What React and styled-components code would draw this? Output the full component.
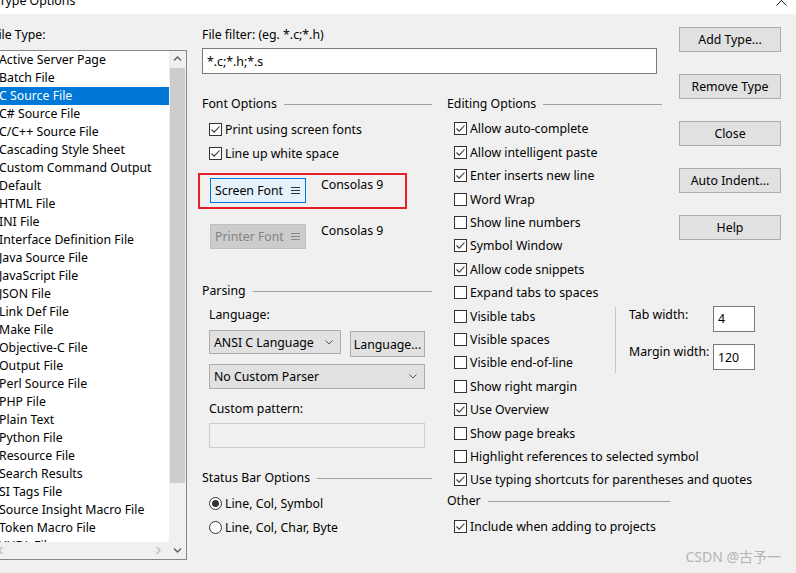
import React from "react";
import styled, { createGlobalStyle } from "styled-components";

const GlobalStyle = createGlobalStyle`
  html, body {
    margin: 0;
    padding: 0;
    background: #f0f0f0;
  }
  body {
    font-family: "Noto Sans", "Noto Sans CJK SC", sans-serif;
    font-size: 12.3px;
    color: #000;
    overflow: hidden;
  }
`;

const Window = styled.div`
  position: relative;
  width: 796px;
  height: 573px;
  overflow: hidden;
  background: #f0f0f0;
`;

const TitleBar = styled.div`
  height: 14px;
  background: #fff;
  display: flex;
  justify-content: space-between;
  align-items: flex-start;
  overflow: hidden;
`;

const TitleText = styled.div`
  margin: -7px 0 0 -1px;
  line-height: 16px;
`;

const CloseIcon = styled.svg`
  margin: -5px 9px 0 0;
`;

const Body = styled.div`
  display: flex;
  align-items: flex-start;
`;

const LeftCol = styled.div`
  margin-left: -8px;
  width: 195px;
  padding-top: 13px;
  display: flex;
  flex-direction: column;
`;

const Label = styled.div`
  line-height: 16px;
  padding-left: ${(p) => p.indent || 0}px;
  margin-top: ${(p) => p.top || 0}px;
  white-space: nowrap;
`;

const ListBox = styled.div`
  margin-top: 7px;
  height: 510px;
  box-sizing: border-box;
  border: 1px solid #828790;
  background: #fff;
  display: flex;
`;

const ListMain = styled.div`
  width: 176px;
  display: flex;
  flex-direction: column;
`;

const Items = styled.div`
  height: 491px;
  overflow: hidden;
`;

const Item = styled.div`
  height: 18px;
  line-height: 18px;
  padding-left: 6px;
  white-space: nowrap;
  background: ${(p) => (p.selected ? "#0078d7" : "transparent")};
  color: ${(p) => (p.selected ? "#fff" : "#000")};
`;

const HScroll = styled.div`
  height: 17px;
  background: #f0f0f0;
  display: flex;
  align-items: center;
  justify-content: space-between;
  padding: 0 6px 0 4px;
`;

const VScroll = styled.div`
  width: 17px;
  background: #f0f0f0;
  display: flex;
  flex-direction: column;
`;

const Arrow = styled.div`
  height: 17px;
  display: flex;
  align-items: center;
  justify-content: center;
`;

const Thumb = styled.div`
  height: 415px;
  margin: 0 1px;
  background: #cdcdcd;
`;

const Track = styled.div`
  flex: 1;
`;

const MiddleCol = styled.div`
  margin-left: 15px;
  width: 468px;
  padding-top: 13px;
  display: flex;
  flex-direction: column;
`;

const TextInput = styled.div`
  box-sizing: border-box;
  width: ${(p) => p.w}px;
  height: ${(p) => p.h || 26}px;
  margin-top: ${(p) => p.top || 0}px;
  border: 1px solid ${(p) => (p.disabled ? "#cccccc" : "#7a7a7a")};
  background: ${(p) => (p.disabled ? "#f0f0f0" : "#fff")};
  padding-left: 4px;
  display: flex;
  align-items: center;
`;

const Columns = styled.div`
  margin-top: 22px;
  display: flex;
  gap: 15px;
`;

const SubCol = styled.div`
  width: ${(p) => p.w}px;
  flex: none;
  display: flex;
  flex-direction: column;
`;

const Heading = styled.div`
  width: ${(p) => p.w}px;
  height: 16px;
  line-height: 16px;
  margin-top: ${(p) => p.top || 0}px;
  display: flex;
  align-items: center;
  white-space: nowrap;

  &::after {
    content: "";
    flex: 1;
    height: 1px;
    margin: 1px 0 0 7px;
    background: #a0a0a0;
  }
`;

const OptionList = styled.div`
  margin-top: ${(p) => p.top || 0}px;
  padding-left: 7px;
  display: flex;
  flex-direction: column;
`;

const OptionRow = styled.div`
  height: ${(p) => p.h}px;
  display: flex;
  align-items: center;
  gap: 3px;
  white-space: nowrap;
`;

const Box = styled.div`
  box-sizing: border-box;
  flex: none;
  width: 13px;
  height: 13px;
  border: 1px solid #333;
  background: #fff;
  display: flex;
  align-items: center;
  justify-content: center;
  border-radius: ${(p) => (p.round ? "50%" : "0")};
`;

const Dot = styled.div`
  width: 7px;
  height: 7px;
  border-radius: 50%;
  background: #333;
`;

const FontRow = styled.div`
  box-sizing: border-box;
  width: 209px;
  height: ${(p) => (p.highlighted ? 36 : 35)}px;
  margin: ${(p) => p.top}px 0 0 -4px;
  border: 2px solid ${(p) => (p.highlighted ? "#e8202a" : "transparent")};
  padding: 3px 0 0 10px;
  display: flex;
  align-items: flex-start;
  gap: 15px;
`;

const FontButton = styled.div`
  box-sizing: border-box;
  width: 96px;
  height: 25px;
  padding: 0 5px 0 4px;
  display: flex;
  align-items: center;
  justify-content: space-between;
  white-space: nowrap;
  background: ${(p) => (p.disabled ? "#cccccc" : "#e5f1fb")};
  border: 1px solid ${(p) => (p.disabled ? "#bfbfbf" : "#0078d7")};
  color: ${(p) => (p.disabled ? "#838383" : "#000")};
`;

const FontName = styled.div`
  line-height: 14px;
`;

const Select = styled.div`
  box-sizing: border-box;
  width: ${(p) => p.w}px;
  height: ${(p) => p.h}px;
  margin-top: ${(p) => p.top || 0}px;
  padding: 0 7px 0 4px;
  background: #e1e1e1;
  border: 1px solid #adadad;
  display: flex;
  align-items: center;
  justify-content: space-between;
  white-space: nowrap;
`;

const ParseRow = styled.div`
  margin-top: 7px;
  display: flex;
  align-items: flex-start;
  gap: 9px;
`;

const Button = styled.div`
  box-sizing: border-box;
  width: ${(p) => p.w || 102}px;
  height: ${(p) => p.h || 25}px;
  margin-top: ${(p) => p.top || 0}px;
  background: #e1e1e1;
  border: 1px solid #adadad;
  display: flex;
  align-items: center;
  justify-content: center;
  white-space: nowrap;
`;

const SplitBlock = styled.div`
  display: flex;
  align-items: stretch;
`;

const Separator = styled.div`
  flex: none;
  width: 1px;
  margin: 2.5px 0 1.7px;
  background: #c8c8c8;
`;

const WidthPanel = styled.div`
  flex: none;
  padding: 1.5px 0 0 13px;
  display: grid;
  grid-template-columns: 84px 42px;
  row-gap: 8px;
  align-items: start;
`;

const PanelLabel = styled.div`
  line-height: 16px;
  margin-top: ${(p) => p.top || 0}px;
  white-space: nowrap;
`;

const RightCol = styled.div`
  margin-left: 9px;
  padding-top: 13px;
  display: flex;
  flex-direction: column;
  gap: 22px;
`;

const Watermark = styled.div`
  position: absolute;
  right: 15px;
  bottom: 8px;
  font-size: 14px;
  line-height: 16px;
  color: #b4b4b4;
  white-space: nowrap;
`;

const fileTypes = [
  "Active Server Page",
  "Batch File",
  "C Source File",
  "C# Source File",
  "C/C++ Source File",
  "Cascading Style Sheet",
  "Custom Command Output",
  "Default",
  "HTML File",
  "INI File",
  "Interface Definition File",
  "Java Source File",
  "JavaScript File",
  "JSON File",
  "Link Def File",
  "Make File",
  "Objective-C File",
  "Output File",
  "Perl Source File",
  "PHP File",
  "Plain Text",
  "Python File",
  "Resource File",
  "Search Results",
  "SI Tags File",
  "Source Insight Macro File",
  "Token Macro File",
  "VHDL File",
];

const editTop = [
  ["Allow auto-complete", true],
  ["Allow intelligent paste", true],
  ["Enter inserts new line", true],
  ["Word Wrap", false],
  ["Show line numbers", false],
  ["Symbol Window", true],
  ["Allow code snippets", true],
  ["Expand tabs to spaces", false],
];

const editMid = [
  ["Visible tabs", false],
  ["Visible spaces", false],
  ["Visible end-of-line", false],
];

const editBottom = [
  ["Show right margin", false],
  ["Use Overview", true],
  ["Show page breaks", false],
  ["Highlight references to selected symbol", false],
  ["Use typing shortcuts for parentheses and quotes", true],
];

const Chevron = ({ dir, color = "#606060" }) => {
  const pts = {
    up: "1,5.5 4.5,2 8,5.5",
    down: "1,2.5 4.5,6 8,2.5",
    left: "5.5,1 2,4.5 5.5,8",
    right: "2.5,1 6,4.5 2.5,8",
  }[dir];
  return (
    <svg width="9" height="9" viewBox="0 0 9 9">
      <polyline points={pts} fill="none" stroke={color} strokeWidth="1.4" />
    </svg>
  );
};

const SelectArrow = () => (
  <svg width="8" height="5" viewBox="0 0 8 5">
    <polyline points="0.5,0.5 4,4 7.5,0.5" fill="none" stroke="#555" strokeWidth="1" />
  </svg>
);

const Hamburger = ({ color }) => (
  <svg width="9" height="9" viewBox="0 0 9 9">
    <path d="M0 1.5h9M0 4.5h9M0 7.5h9" stroke={color} strokeWidth="1" />
  </svg>
);

const CheckBox = ({ checked }) => (
  <Box>
    {checked && (
      <svg width="11" height="11" viewBox="0 0 11 11">
        <path d="M1.5 5.5 L4.2 8.2 L9.5 2.5" fill="none" stroke="#333" strokeWidth="1.1" />
      </svg>
    )}
  </Box>
);

const Option = ({ label, checked, h = 23.4 }) => (
  <OptionRow h={h}>
    <CheckBox checked={checked} />
    <span>{label}</span>
  </OptionRow>
);

const Radio = ({ label, checked }) => (
  <OptionRow h={24}>
    <Box round>{checked && <Dot />}</Box>
    <span>{label}</span>
  </OptionRow>
);

const App = () => {
  return (
    <Window>
      <GlobalStyle />
      <TitleBar>
        <TitleText>Type Options</TitleText>
        <CloseIcon width="11" height="11" viewBox="0 0 11 11">
          <path d="M0.5 0.5 L10.5 10.5 M10.5 0.5 L0.5 10.5" stroke="#222" strokeWidth="1" />
        </CloseIcon>
      </TitleBar>
      <Body>
        <LeftCol>
          <Label>File Type:</Label>
          <ListBox>
            <ListMain>
              <Items>
                {fileTypes.map((name) => (
                  <Item key={name} selected={name === "C Source File"}>
                    {name}
                  </Item>
                ))}
              </Items>
              <HScroll>
                <Chevron dir="left" color="#bdbdbd" />
                <Chevron dir="right" color="#bdbdbd" />
              </HScroll>
            </ListMain>
            <VScroll>
              <Arrow>
                <Chevron dir="up" />
              </Arrow>
              <Thumb />
              <Track />
              <Arrow>
                <Chevron dir="down" />
              </Arrow>
            </VScroll>
          </ListBox>
        </LeftCol>

        <MiddleCol>
          <Label>File filter: (eg. *.c;*.h)</Label>
          <TextInput w={455} top={5}>*.c;*.h;*.s</TextInput>
          <Columns>
            <SubCol w={230}>
              <Heading w={230}>Font Options</Heading>
              <OptionList top={5}>
                <Option label="Print using screen fonts" checked h={24} />
                <Option label="Line up white space" checked h={24} />
              </OptionList>
              <FontRow highlighted top={8}>
                <FontButton>
                  <span>Screen Font</span>
                  <Hamburger color="#333" />
                </FontButton>
                <FontName>Consolas 9</FontName>
              </FontRow>
              <FontRow top={10}>
                <FontButton disabled>
                  <span>Printer Font</span>
                  <Hamburger color="#8a8a8a" />
                </FontButton>
                <FontName>Consolas 9</FontName>
              </FontRow>

              <Heading w={230} top={29}>Parsing</Heading>
              <Label indent={7} top={8}>Language:</Label>
              <OptionList>
                <ParseRow>
                  <Select w={132} h={24}>
                    <span>ANSI C Language</span>
                    <SelectArrow />
                  </Select>
                  <Button w={75} h={26} top={1}>Language...</Button>
                </ParseRow>
                <Select w={216} h={25} top={7}>
                  <span>No Custom Parser</span>
                  <SelectArrow />
                </Select>
              </OptionList>
              <Label indent={7} top={12}>Custom pattern:</Label>
              <OptionList top={6}>
                <TextInput w={216} h={25} disabled />
              </OptionList>

              <Heading w={230} top={22}>Status Bar Options</Heading>
              <OptionList top={5}>
                <Radio label="Line, Col, Symbol" checked />
                <Radio label="Line, Col, Char, Byte" />
              </OptionList>
            </SubCol>

            <SubCol w={223}>
              <Heading w={215}>Editing Options</Heading>
              <OptionList top={5.3}>
                {editTop.map(([label, checked]) => (
                  <Option key={label} label={label} checked={checked} />
                ))}
                <SplitBlock>
                  <SubCol w={161}>
                    {editMid.map(([label, checked]) => (
                      <Option key={label} label={label} checked={checked} />
                    ))}
                  </SubCol>
                  <Separator />
                  <WidthPanel>
                    <PanelLabel top={1}>Tab width:</PanelLabel>
                    <TextInput w={42}>4</TextInput>
                    <PanelLabel>Margin width:</PanelLabel>
                    <TextInput w={42}>120</TextInput>
                  </WidthPanel>
                </SplitBlock>
                {editBottom.map(([label, checked]) => (
                  <Option key={label} label={label} checked={checked} />
                ))}
              </OptionList>
              <Heading w={223} top={1.3}>Other</Heading>
              <OptionList top={6.3}>
                <Option label="Include when adding to projects" checked />
              </OptionList>
            </SubCol>
          </Columns>
        </MiddleCol>

        <RightCol>
          <Button>Add Type...</Button>
          <Button>Remove Type</Button>
          <Button>Close</Button>
          <Button>Auto Indent...</Button>
          <Button>Help</Button>
        </RightCol>
      </Body>
      <Watermark>CSDN @古予一</Watermark>
    </Window>
  );
};

export default App;
